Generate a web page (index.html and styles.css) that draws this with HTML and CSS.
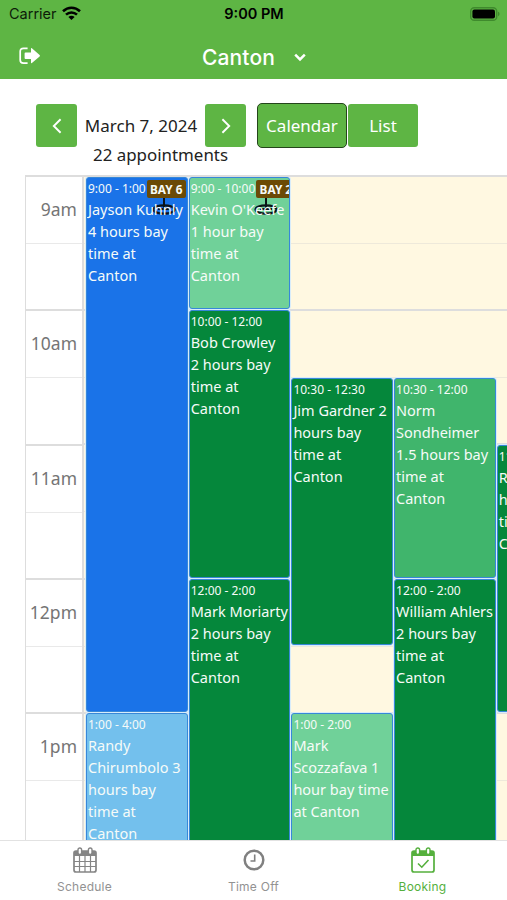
FILE: index.html
```html
<!DOCTYPE html>
<html lang="en">
<head>
    <meta charset="UTF-8">
    <meta name="viewport" content="width=device-width, initial-scale=1.0">
    <title>Booking</title>
    <link rel="stylesheet" href="styles.css">
</head>
<body>
    <!-- Green header -->
    <header class="header">
        <div class="status-bar">
            <div class="carrier">
                <span>Carrier</span>
                <svg width="19" height="15" viewBox="0 0 19 15" fill="none" stroke="#000" stroke-width="2.6">
                    <path d="M1 5.2C6 .6 13 .6 18 5.2"/>
                    <path d="M4 8.6C7.2 5.7 11.8 5.7 15 8.6"/>
                    <path d="M9.5 14L6.4 10.9C8.2 9.3 10.8 9.3 12.6 10.9Z" fill="#000" stroke="none"/>
                </svg>
            </div>
            <div class="clock">9:00 PM</div>
            <svg class="battery" width="30" height="14" viewBox="0 0 30 14">
                <rect x=".7" y=".7" width="26" height="12.6" rx="3.6" fill="none" stroke="#3f8a2d" stroke-width="1.4"/>
                <rect x="2.4" y="2.4" width="22.6" height="9.2" rx="2" fill="#000"/>
                <path d="M28 4.8c2 .6 2 3.8 0 4.4z" fill="#3f8a2d"/>
            </svg>
        </div>
        <div class="nav-bar">
            <svg width="22" height="18" viewBox="0 0 22 18">
                <path d="M8.6 1.3H4.5Q1.2 1.3 1.2 4.5V13Q1.2 16.2 4.5 16.2H8.6" fill="none" stroke="#fff" stroke-width="1.7"/>
                <path d="M6.5 5.5H12V1.6q0-1 .9-.4L20.6 8q.8.7 0 1.4L12.9 16q-.9.6-.9-.4V12H6.5q-.9 0-.9-.9V6.4q0-.9.9-.9z" fill="#fff"/>
            </svg>
            <div class="title">
                <span>Canton</span>
                <svg width="12" height="9" viewBox="0 0 12 9" fill="none" stroke="#fff" stroke-width="2.5">
                    <path d="M1.2 1.6L6 6.4L10.8 1.6"/>
                </svg>
            </div>
        </div>
    </header>

    <!-- Date and view switch -->
    <div class="toolbar">
        <button class="btn arrow">
            <svg width="10" height="16" viewBox="0 0 10 16" fill="none" stroke="#fff" stroke-width="1.9"><path d="M8.6 1.3L1.8 8L8.6 14.7"/></svg>
        </button>
        <span class="date">March 7, 2024</span>
        <button class="btn arrow">
            <svg width="10" height="16" viewBox="0 0 10 16" fill="none" stroke="#fff" stroke-width="1.9"><path d="M1.4 1.3L8.2 8L1.4 14.7"/></svg>
        </button>
        <button class="btn view active">Calendar</button>
        <button class="btn list">List</button>
    </div>
    <div class="count">22 appointments</div>

    <!-- Calendar -->
    <main class="calendar">
        <div class="hours">
            <div class="hour"><span>9am</span></div>
            <div class="hour"><span>10am</span></div>
            <div class="hour"><span>11am</span></div>
            <div class="hour"><span>12pm</span></div>
            <div class="hour"><span>1pm</span></div>
        </div>
        <div class="events">
            <div class="event blue col1 from-9 slots8">
                <div class="time">9:00 - 1:00</div>
                <div class="badge">BAY 6</div>
                <svg class="tee" width="26" height="18" viewBox="0 0 26 18" fill="none" stroke="#0b1418">
                    <path d="M13 0V10" stroke-width="2"/>
                    <ellipse cx="13" cy="11.5" rx="10.5" ry="4.2" stroke-width="2.2"/>
                    <path d="M7 11h12" stroke-width="2"/>
                </svg>
                <div class="name">Jayson Kuhnly 4 hours bay time at Canton</div>
            </div>
            <div class="event mint col2 from-9 slots2">
                <div class="time">9:00 - 10:00</div>
                <div class="badge cut">BAY 2</div>
                <svg class="tee" width="26" height="18" viewBox="0 0 26 18" fill="none" stroke="#0b1418">
                    <path d="M13 0V10" stroke-width="2"/>
                    <ellipse cx="13" cy="11.5" rx="10.5" ry="4.2" stroke-width="2.2"/>
                    <path d="M7 11h12" stroke-width="2"/>
                </svg>
                <div class="name">Kevin O'Keefe 1 hour bay time at Canton</div>
            </div>
            <div class="event green col2 from-10 slots4">
                <div class="time">10:00 - 12:00</div>
                <div class="name">Bob Crowley<br>2 hours bay time at Canton</div>
            </div>
            <div class="event green col2 from-12 slots4">
                <div class="time">12:00 - 2:00</div>
                <div class="name">Mark Moriarty 2 hours bay time at Canton</div>
            </div>
            <div class="event green col3 from-1030 slots4">
                <div class="time">10:30 - 12:30</div>
                <div class="name">Jim Gardner 2 hours bay time at Canton</div>
            </div>
            <div class="event mint col3 from-1 slots2">
                <div class="time">1:00 - 2:00</div>
                <div class="name">Mark Scozzafava 1 hour bay time at Canton</div>
            </div>
            <div class="event medium col4 from-1030 slots3">
                <div class="time">10:30 - 12:00</div>
                <div class="name">Norm Sondheimer 1.5 hours bay time at Canton</div>
            </div>
            <div class="event green col4 from-12 slots4">
                <div class="time">12:00 - 2:00</div>
                <div class="name">William Ahlers 2 hours bay time at Canton</div>
            </div>
            <div class="event green col5 from-11 slots4">
                <div class="time">11:00 - 1:00</div>
                <div class="name">Rick Martin 2 hours bay time at Canton</div>
            </div>
            <div class="event sky col1 from-1 slots6">
                <div class="time">1:00 - 4:00</div>
                <div class="name">Randy Chirumbolo 3 hours bay time at Canton</div>
            </div>
        </div>
    </main>

    <!-- Bottom tabs -->
    <nav class="tabs">
        <div class="tab">
            <svg width="24" height="26" viewBox="0 0 24 26">
                <rect x="1" y="4" width="22" height="21" rx="2" fill="none" stroke="#858585" stroke-width="1.7"/>
                <path d="M1 4h22v5H1z" fill="#858585"/>
                <path d="M6.5 9v16M12 9v16M17.5 9v16M1 14.5h22M1 19.5h22" stroke="#858585" stroke-width="1.2"/>
                <rect x="5" y="1" width="3.6" height="6.5" rx="1.8" fill="#fff" stroke="#858585" stroke-width="1.4"/>
                <rect x="15.4" y="1" width="3.6" height="6.5" rx="1.8" fill="#fff" stroke="#858585" stroke-width="1.4"/>
            </svg>
            <span>Schedule</span>
        </div>
        <div class="tab">
            <svg width="24" height="26" viewBox="0 0 24 26" fill="none" stroke="#808080">
                <circle cx="12" cy="13" r="9.3" stroke-width="2.5"/>
                <path d="M12.7 7.5V14H8.5" stroke-width="1.6"/>
            </svg>
            <span>Time Off</span>
        </div>
        <div class="tab selected">
            <svg width="24" height="26" viewBox="0 0 24 26">
                <rect x="1" y="4" width="22" height="21" rx="2" fill="none" stroke="#55b03d" stroke-width="1.7"/>
                <path d="M1 4h22v5H1z" fill="#55b03d"/>
                <path d="M7 16.5L10.8 20.2L17.5 13" fill="none" stroke="#55b03d" stroke-width="1.6"/>
                <rect x="5" y="1" width="3.6" height="6.5" rx="1.8" fill="#fff" stroke="#55b03d" stroke-width="1.4"/>
                <rect x="15.4" y="1" width="3.6" height="6.5" rx="1.8" fill="#fff" stroke="#55b03d" stroke-width="1.4"/>
            </svg>
            <span>Booking</span>
        </div>
    </nav>
</body>
</html>
```
FILE: styles.css
```css
* {
    box-sizing: border-box;
}

body {
    margin: 0;
    height: 900px;
    display: flex;
    flex-direction: column;
    overflow: hidden;
    background: #fff;
    font-family: "Noto Sans", sans-serif;
    color: #222;
}

/* Header */
.header {
    height: 79px;
    flex: none;
    background: #5eb544;
    font-family: Inter, sans-serif;
}

.status-bar {
    height: 27px;
    padding: 0 8px 0 9px;
    display: grid;
    grid-template-columns: 1fr auto 1fr;
    align-items: center;
    font-size: 14.5px;
    color: #0d1c09;
}

.carrier {
    display: flex;
    align-items: center;
    gap: 5px;
}

.clock {
    font-weight: 600;
    color: #000;
}

.battery {
    justify-self: end;
    margin-right: -1px;
}

.nav-bar {
    height: 52px;
    padding: 5px 18px 0 19px;
    display: grid;
    grid-template-columns: 1fr auto 1fr;
    align-items: center;
}

.title {
    display: flex;
    align-items: center;
    gap: 19px;
    padding-top: 3px;
    color: #fff;
    font-size: 21px;
    font-weight: 500;
    letter-spacing: 0.1px;
}

/* Toolbar */
.toolbar {
    flex: none;
    display: flex;
    align-items: center;
    padding: 25px 0 0 36px;
    height: 68px;
}

.btn {
    display: flex;
    align-items: center;
    justify-content: center;
    height: 43px;
    padding: 0;
    border: none;
    border-radius: 3px;
    background: #5eb544;
    color: #fff;
    font-family: inherit;
    font-size: 17px;
}

.arrow {
    width: 41px;
}

.date {
    width: 128px;
    text-align: center;
    font-size: 17px;
    white-space: nowrap;
}

.view {
    width: 90px;
    height: 45px;
    margin-left: 11px;
}

.active {
    border: 1.5px solid #24451b;
    border-radius: 5px;
}

.list {
    width: 70px;
    margin-left: 1px;
}

.count {
    flex: none;
    height: 28px;
    padding-left: 93px;
    font-size: 16.9px;
    line-height: 16px;
}

/* Calendar */
.calendar {
    flex: 1;
    min-height: 0;
    display: grid;
    grid-template-columns: 58px 1fr;
    margin-left: 25px;
    border-top: 2px solid #ddd;
    border-left: 1px solid #ddd;
    overflow: hidden;
}

.hours {
    border-right: 2px solid #ddd;
}

.hour {
    height: 134.25px;
    padding: 20px 5px 0 0;
    text-align: right;
    font-size: 17.5px;
    line-height: 24px;
    color: #757575;
    background: linear-gradient(#e9e9e9, #e9e9e9) 0 66px / 100% 1px no-repeat;
    border-bottom: 2px solid #ddd;
}

.events {
    display: grid;
    grid-template-columns: repeat(5, 102.7px);
    grid-template-rows: repeat(14, 67.12px);
    padding-left: 1px;
    background: repeating-linear-gradient(#fff8e1 0 66px, #eee9da 66px 67px, #fff8e1 67px 132.25px, #ddd 132.25px 134.25px);
}

.event {
    position: relative;
    min-width: 0;
    margin: -0.8px 0 2px 1px;
    padding: 1px 0 0 1px;
    border: 1px solid #3788d8;
    border-radius: 3px;
    box-shadow: 0 0 0 1px #d8ecfa;
    color: #f6fbf8;
    overflow: hidden;
}

.time {
    font-size: 12px;
    line-height: 20px;
    white-space: nowrap;
}

.name {
    position: relative;
    margin-top: -1px;
    font-size: 14.5px;
    line-height: 22px;
}

/* Bay label lies over the event */
.badge {
    position: absolute;
    top: 2px;
    right: 1px;
    width: 39px;
    height: 18px;
    border-radius: 2px;
    background: #6b4a05;
    font-size: 11.8px;
    font-weight: bold;
    line-height: 18px;
    text-align: center;
    white-space: nowrap;
}

.cut {
    right: -6px;
}

.tee {
    position: absolute;
    top: 20px;
    right: 10px;
}

/* Event colors */
.blue { background: #1a73e8; }
.sky { background: #73c0ed; }
.green { background: #05873b; }
.medium { background: #40b56c; }
.mint { background: #70d199; }

/* Columns */
.col1 { grid-column: 1; }
.col2 { grid-column: 2; }
.col3 { grid-column: 3; }
.col4 { grid-column: 4; }
.col5 { grid-column: 5; }

/* Start time and length in half hours */
.from-9 { grid-row-start: 1; margin-top: 0; }
.from-10 { grid-row-start: 3; }
.from-1030 { grid-row-start: 4; }
.from-11 { grid-row-start: 5; }
.from-12 { grid-row-start: 7; }
.from-1 { grid-row-start: 9; }
.slots2 { grid-row-end: span 2; }
.slots3 { grid-row-end: span 3; }
.slots4 { grid-row-end: span 4; }
.slots6 { grid-row-end: span 6; }
.slots8 { grid-row-end: span 8; }

/* Bottom tabs */
.tabs {
    flex: none;
    height: 60px;
    display: grid;
    grid-template-columns: repeat(3, 1fr);
    border-top: 1px solid #e2e2e2;
    background: #fff;
    font-family: Inter, sans-serif;
}

.tab {
    display: flex;
    flex-direction: column;
    align-items: center;
    padding-top: 6px;
    gap: 6px;
    font-size: 12px;
    line-height: 16px;
    letter-spacing: 0.25px;
    color: #929292;
}

.selected {
    color: #55b03d;
}
```
